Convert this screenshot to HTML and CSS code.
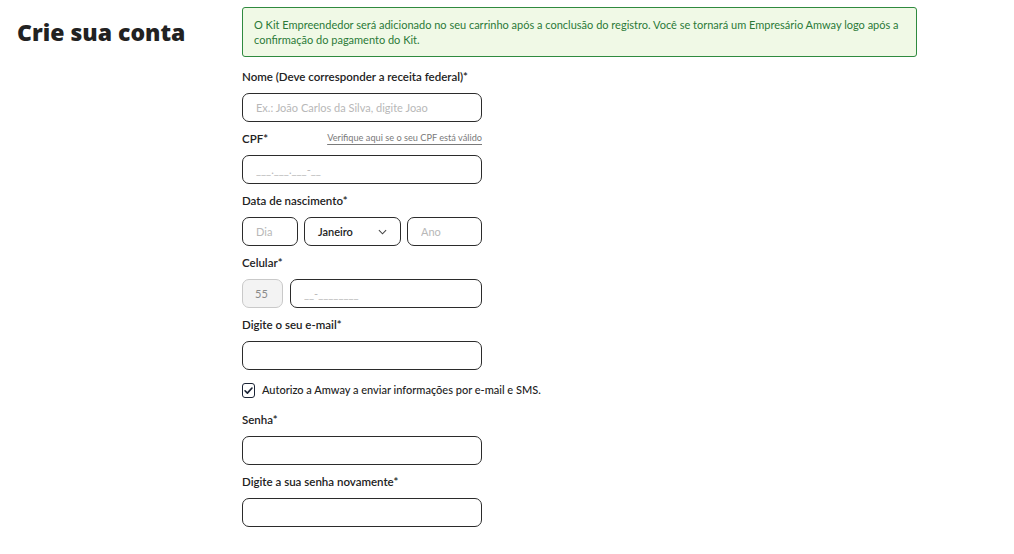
FILE: index.html
```html
<!DOCTYPE html>
<html lang="pt-BR">
<head>
    <meta charset="UTF-8">
    <meta name="viewport" content="width=device-width, initial-scale=1.0">
    <title>Crie sua conta</title>
    <link rel="stylesheet" href="styles.css">
</head>
<body>
    <div class="page">
        <aside class="side">
            <h1 class="title">Crie sua conta</h1>
        </aside>

        <main class="form-col">
            <div class="notice">
                O Kit Empreendedor será adicionado no seu carrinho após a conclusão do registro. Você se tornará um Empresário Amway logo após a confirmação do pagamento do Kit.
            </div>

            <form class="signup">
                <div class="field">
                    <label class="label" for="nome">Nome (Deve corresponder a receita federal)*</label>
                    <input class="input" id="nome" type="text" placeholder="Ex.: João Carlos da Silva, digite Joao">
                </div>

                <div class="field">
                    <div class="label-row">
                        <label class="label" for="cpf">CPF*</label>
                        <a class="hint-link" href="#">Verifique aqui se o seu CPF está válido</a>
                    </div>
                    <input class="input" id="cpf" type="text" placeholder="___.___.___-__">
                </div>

                <div class="field">
                    <label class="label" for="dia">Data de nascimento*</label>
                    <div class="row">
                        <input class="input input-day" id="dia" type="text" placeholder="Dia">
                        <div class="select">
                            <span>Janeiro</span>
                            <svg viewBox="0 0 10 6" fill="none" stroke="currentColor" stroke-width="1.2">
                                <path d="M1 1l4 4 4-4"/>
                            </svg>
                        </div>
                        <input class="input input-year" type="text" placeholder="Ano">
                    </div>
                </div>

                <div class="field">
                    <label class="label" for="celular">Celular*</label>
                    <div class="row row-phone">
                        <div class="ddi">55</div>
                        <input class="input" id="celular" type="text" placeholder="__-________">
                    </div>
                </div>

                <div class="field">
                    <label class="label" for="email">Digite o seu e-mail*</label>
                    <input class="input" id="email" type="text">
                </div>

                <label class="consent">
                    <span class="checkbox">
                        <svg viewBox="0 0 12 12" fill="none" stroke="#1b2436" stroke-width="1.8" stroke-linecap="round" stroke-linejoin="round">
                            <path d="M2.2 6.3l2.6 2.6 5-5.6"/>
                        </svg>
                    </span>
                    Autorizo a Amway a enviar informações por e-mail e SMS.
                </label>

                <div class="field">
                    <label class="label" for="senha">Senha*</label>
                    <input class="input" id="senha" type="password">
                </div>

                <div class="field">
                    <label class="label" for="senha2">Digite a sua senha novamente*</label>
                    <input class="input" id="senha2" type="password">
                </div>
            </form>
        </main>
    </div>
</body>
</html>
```

FILE: styles.css
```css
:root {
    --text-color: #222;
    --border-color: #2b2b2b;
    --placeholder: #b8b8b8;
    --notice-bg: #f0f9e6;
    --notice-border: #2f8a3f;
    --notice-text: #2b7a38;
}

* {
    margin: 0;
    padding: 0;
    box-sizing: border-box;
    font-family: Lato, 'Noto Sans', sans-serif;
}

body {
    background: #fff;
    color: var(--text-color);
}

.page {
    display: flex;
    padding-top: 7px;
}

.side {
    width: 242px;
    flex-shrink: 0;
    padding-left: 17px;
}

.title {
    font-family: 'Open Sans', sans-serif;
    font-size: 23px;
    font-weight: 800;
    line-height: 50px;
    color: #222;
}

.form-col {
    width: 675px;
}

.notice {
    background: var(--notice-bg);
    border: 1px solid var(--notice-border);
    border-radius: 3px;
    color: var(--notice-text);
    font-size: 11px;
    line-height: 15px;
    padding: 9px 11px;
}

.signup {
    width: 240px;
    margin-top: 12px;
    display: flex;
    flex-direction: column;
}

.field {
    display: flex;
    flex-direction: column;
    margin-bottom: 9px;
}

.label {
    font-size: 11.5px;
    font-weight: 600;
    line-height: 16px;
    color: var(--text-color);
    margin-bottom: 8px;
}

.label-row {
    display: flex;
    justify-content: space-between;
    align-items: flex-start;
}

.hint-link {
    font-size: 9.2px;
    color: #7a7a7a;
    text-decoration: underline;
    text-underline-offset: 3px;
    line-height: 14px;
}

.input {
    width: 100%;
    height: 29px;
    border: 1px solid var(--border-color);
    border-radius: 7px;
    padding: 0 13px;
    font-size: 11px;
    color: var(--text-color);
    background: #fff;
    outline: none;
}

.input::placeholder {
    color: var(--placeholder);
}

.row {
    display: flex;
    gap: 6px;
}

.input-day {
    width: 56px;
    flex-shrink: 0;
}

.input-year {
    width: 75px;
    flex-shrink: 0;
}

.select {
    width: 97px;
    height: 29px;
    flex-shrink: 0;
    border: 1px solid var(--border-color);
    border-radius: 7px;
    display: flex;
    align-items: center;
    justify-content: space-between;
    padding: 0 13px 0 13px;
    font-size: 11px;
    font-weight: 600;
    color: var(--text-color);
}

.select svg {
    width: 9px;
    height: 6px;
    color: #444;
}

.row-phone {
    gap: 7px;
}

.ddi {
    width: 41px;
    height: 29px;
    flex-shrink: 0;
    border: 1px solid #c9c9c9;
    border-radius: 7px;
    background: #f3f3f3;
    color: #8a8a8a;
    font-size: 11px;
    display: flex;
    align-items: center;
    padding-left: 12px;
}

.consent {
    display: flex;
    align-items: center;
    gap: 7px;
    margin-top: 3px;
    margin-bottom: 14px;
    font-size: 11px;
    font-weight: 500;
    white-space: nowrap;
    line-height: 16px;
}

.checkbox {
    width: 15px;
    height: 15px;
    border: 1.5px solid #1b2436;
    border-radius: 3px;
    display: flex;
    align-items: center;
    justify-content: center;
}

.checkbox svg {
    width: 11px;
    height: 11px;
}
```
